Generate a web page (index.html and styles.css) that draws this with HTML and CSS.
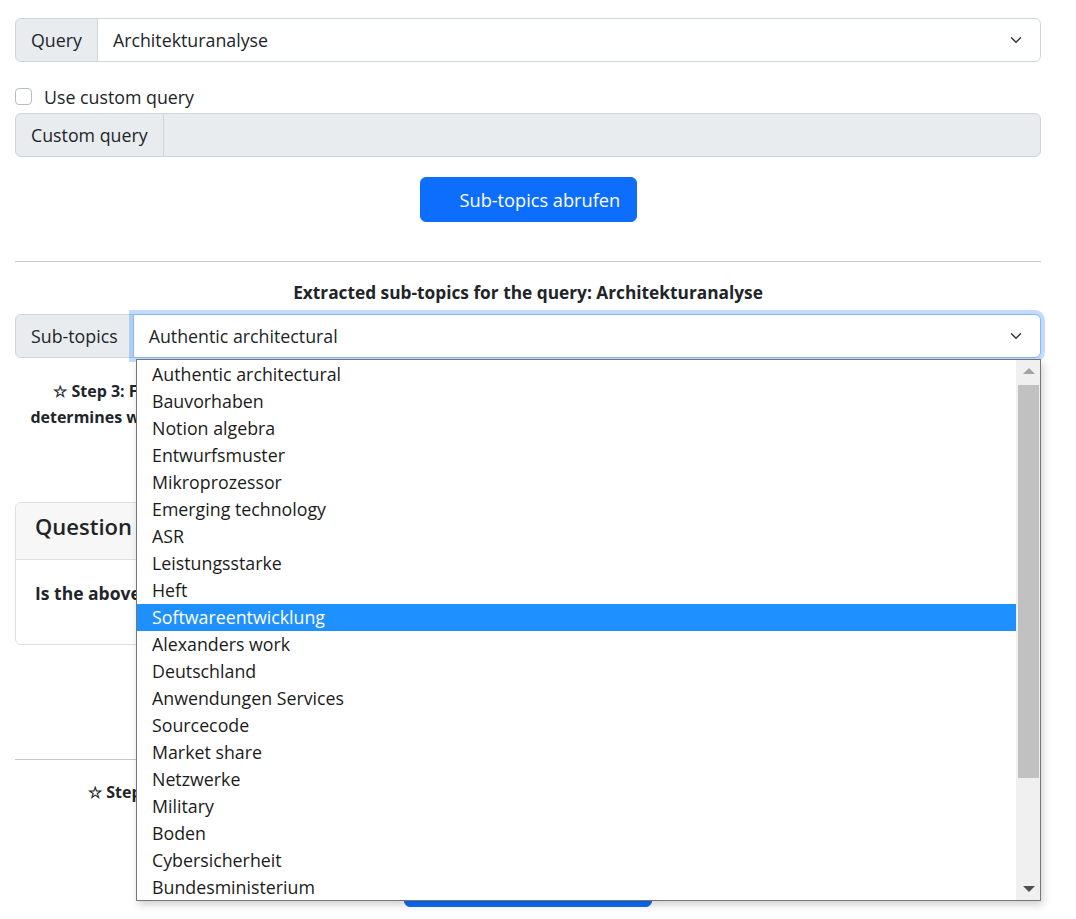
FILE: index.html
```html
<!DOCTYPE html>
<html lang="en">
<head>
<meta charset="utf-8">
<title>Sub-topics</title>
<link rel="stylesheet" href="styles.css">
</head>
<body>
<div class="page">
  <div class="input-group">
    <span class="ig-label">Query</span>
    <div class="select">
      <span class="select-text">Architekturanalyse</span>
      <svg class="chev" viewBox="0 0 16 16" width="16" height="12"><path d="m2 5 6 6 6-6" fill="none" stroke="#343a40" stroke-width="2" stroke-linecap="round" stroke-linejoin="round"/></svg>
    </div>
  </div>

  <label class="check"><span class="check-box"></span><span>Use custom query</span></label>

  <div class="input-group custom">
    <span class="ig-label">Custom query</span>
    <div class="field disabled"></div>
  </div>

  <div class="btn-row">
    <button class="btn btn-primary fetch">Sub-topics abrufen</button>
  </div>

  <hr class="rule first">

  <p class="extract">Extracted sub-topics for the query: Architekturanalyse</p>

  <div class="input-group sub">
    <span class="ig-label">Sub-topics</span>
    <div class="select focus">
      <span class="select-text">Authentic architectural</span>
      <svg class="chev" viewBox="0 0 16 16" width="16" height="12"><path d="m2 5 6 6 6-6" fill="none" stroke="#343a40" stroke-width="2" stroke-linecap="round" stroke-linejoin="round"/></svg>
    </div>

    <div class="dropdown">
      <ul class="options">
        <li>Authentic architectural</li>
        <li>Bauvorhaben</li>
        <li>Notion algebra</li>
        <li>Entwurfsmuster</li>
        <li>Mikroprozessor</li>
        <li>Emerging technology</li>
        <li>ASR</li>
        <li>Leistungsstarke</li>
        <li>Heft</li>
        <li class="hl">Softwareentwicklung</li>
        <li>Alexanders work</li>
        <li>Deutschland</li>
        <li>Anwendungen Services</li>
        <li>Sourcecode</li>
        <li>Market share</li>
        <li>Netzwerke</li>
        <li>Military</li>
        <li>Boden</li>
        <li>Cybersicherheit</li>
        <li>Bundesministerium</li>
      </ul>
      <div class="scrollbar">
        <span class="arrow up"></span>
        <span class="thumb"></span>
        <span class="arrow down"></span>
      </div>
    </div>
  </div>

  <p class="step step3">☆ Step 3: For each extracted sub-topic, please read the returned passages closely and answer the questions below. This<br>determines which of the sub-topics are kept as relevant and used in the next step to generate the final analysis of the query.</p>

  <div class="card">
    <div class="card-header">Question 1 of 10</div>
    <div class="card-body">Is the above sub-topic relevant to the query?</div>
  </div>

  <hr class="rule second">

  <p class="step step4">☆ Step 4: After answering all questions, submit your feedback to generate the final lists of relevant sub-topics.</p>

  <div class="btn-row last">
    <button class="btn btn-primary submit">Feedback absenden</button>
  </div>
</div>
</body>
</html>
```

FILE: styles.css
```css
* { box-sizing: border-box; }

html, body {
  margin: 0;
  padding: 0;
  background: #fff;
}

body {
  font-family: "Open Sans", "Noto Sans", "Liberation Sans", sans-serif;
  font-size: 17.5px;
  line-height: 26px;
  color: #212529;
}

.page {
  padding: 18px 35px 0 15px;
  height: 919px;
  overflow: hidden;
}

.input-group {
  display: flex;
  height: 44px;
  position: relative;
}

.ig-label {
  display: flex;
  align-items: center;
  padding: 0 15px;
  background: #e9ecef;
  border: 1px solid #ced4da;
  border-radius: 6px 0 0 6px;
  white-space: nowrap;
  font-size: 17.8px;
}

.select, .field {
  flex: 1;
  display: flex;
  align-items: center;
  justify-content: space-between;
  margin-left: -1px;
  padding: 0 16px 0 15px;
  background: #fff;
  border: 1px solid #ced4da;
  border-radius: 0 6px 6px 0;
  font-size: 17.8px;
}

.field.disabled { background: #e9ecef; }

.select.focus {
  position: relative;
  z-index: 2;
  border-color: #86b7fe;
  box-shadow: 0 0 0 4px rgba(13, 110, 253, 0.25);
}

.chev { display: block; }

.check {
  display: flex;
  align-items: center;
  gap: 12px;
  margin-top: 22px;
  height: 26px;
  font-size: 17.8px;
}

.check-box {
  width: 17px;
  height: 17px;
  margin-top: -1px;
  border: 1px solid #b9bdc1;
  border-radius: 4px;
  background: #fff;
}

.custom { margin-top: 3px; }

.btn-row {
  display: flex;
  justify-content: center;
  margin-top: 20px;
}

.btn {
  font: inherit;
  font-size: 18.2px;
  height: 45px;
  border: 1px solid #0d6efd;
  border-radius: 6px;
  color: #fff;
  background: #0d6efd;
}

.fetch {
  width: 217px;
  padding: 0 10px 0 39px;
  text-align: left;
  white-space: nowrap;
}

.rule {
  border: 0;
  border-top: 1px solid #c8c9ca;
  margin: 0;
}

.rule.first { margin-top: 39px; }

.extract {
  margin: 18px 0 0;
  text-align: center;
  font-weight: 700;
  font-size: 17.3px;
}

.sub { margin-top: 8px; }

.dropdown {
  position: absolute;
  z-index: 10;
  left: 121px;
  right: 0;
  top: 45px;
  height: 542px;
  display: flex;
  background: #fff;
  border: 1px solid #767676;
  box-shadow: 2px 4px 8px rgba(0, 0, 0, 0.18);
}

.options {
  list-style: none;
  margin: 0;
  padding: 1px 0 0;
  flex: 1;
  font-size: 17.8px;
}

.options li {
  height: 27px;
  line-height: 27px;
  padding-left: 15px;
  color: #1b1b1b;
}

.options li.hl {
  background: #1e90ff;
  color: #fff;
}

.scrollbar {
  width: 24px;
  background: #f0f0f0;
  display: flex;
  flex-direction: column;
  align-items: center;
  padding: 0 1px 0 2px;
}

.arrow {
  width: 0;
  height: 0;
  border-left: 6px solid transparent;
  border-right: 6px solid transparent;
}

.arrow.up {
  margin-top: 8px;
  border-bottom: 6px solid #a3a3a3;
  margin-bottom: 11px;
}

.thumb {
  align-self: stretch;
  height: 393px;
  background: #c1c1c1;
}

.arrow.down {
  margin-top: auto;
  margin-bottom: 8px;
  border-top: 6px solid #505050;
}

.step {
  margin: 20px 0 0;
  text-align: center;
  font-weight: 700;
  font-size: 16px;
  white-space: nowrap;
}

.card {
  margin-top: 72px;
  border: 1px solid #dfdfdf;
  border-radius: 6px;
  height: 143px;
  overflow: hidden;
}

.card-header {
  height: 57px;
  padding: 8px 19px 0;
  background: #f7f7f7;
  border-bottom: 1px solid #dfdfdf;
  font-size: 22px;
  line-height: 30px;
  font-weight: 600;
}

.card-body {
  padding: 20px 19px;
  font-weight: 700;
  font-size: 17.5px;
}

.rule.second { margin-top: 114px; }

.step4 { margin-top: 19px; }

.btn-row.last { margin-top: 57px; }

.submit { width: 248px; }
```
